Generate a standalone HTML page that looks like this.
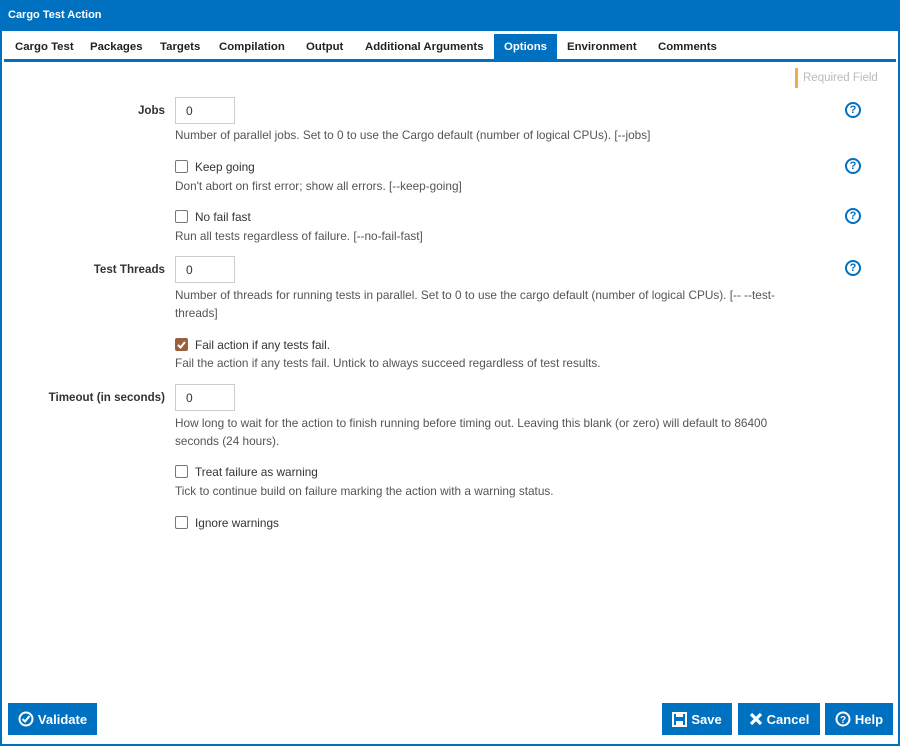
<!DOCTYPE html>
<html><head><style>
*{margin:0;padding:0;box-sizing:border-box}
body{width:900px;height:746px;background:#fff;font-family:"Liberation Sans",sans-serif;font-size:12px;color:#333;position:relative;overflow:hidden}
.frame{position:absolute;left:0;top:0;width:900px;height:746px;border:2px solid #0070c0;border-top:none}
.title{position:absolute;left:0;top:0;width:900px;height:31px;background:#0070c0;color:#fff;font-weight:bold;font-size:11px;padding:9px 8px}
.tab{position:absolute;top:34px;height:25px;font-weight:bold;font-size:11.4px;color:#222;padding-top:7px;white-space:nowrap}
.tab.on{background:#0070c0;color:#fff;text-align:center}
.line{position:absolute;left:4px;top:59px;width:892px;height:3px;background:#0070c0}
.req{position:absolute;left:795px;top:68px;height:20px;border-left:3px solid #f0ad4e;padding:4px 0 0 5px;color:#bbb;font-size:11.5px}
.lbl{position:absolute;right:735px;font-weight:bold;font-size:11.6px;color:#333}
.inp{position:absolute;left:175px;width:60px;height:27px;border:1px solid #ccc;padding:6px 10px;font-size:12px}
.help{position:absolute;left:175px;color:#555;font-size:11.8px;line-height:18px;width:620px}
.cb{position:absolute;left:175px;font-size:11.8px;color:#333}
.cb i{display:inline-block;width:13px;height:13px;border:1px solid #777;border-radius:2px;vertical-align:-2px;margin-right:7px;background:#fff}
.cb i.c{background:#9b5f3e;border-color:#9b5f3e;position:relative}
.q{position:absolute;left:845px;width:16px;height:16px;border:2px solid #0070c0;border-radius:50%;color:#0070c0;font-weight:bold;font-size:11px;text-align:center;line-height:12px}
.btn{position:absolute;top:703px;height:32px;background:#0070c0;color:#fff;font-weight:bold;font-size:13px;display:flex;align-items:center;justify-content:center;gap:4px}
.btn svg{display:block}
</style></head><body>
<div class="title">Cargo Test Action</div>
<div class="frame"></div>
<div class="tab" style="left:15px">Cargo Test</div>
<div class="tab" style="left:90px">Packages</div>
<div class="tab" style="left:160px">Targets</div>
<div class="tab" style="left:219px">Compilation</div>
<div class="tab" style="left:306px">Output</div>
<div class="tab" style="left:365px">Additional Arguments</div>
<div class="tab on" style="left:494px;width:63px">Options</div>
<div class="tab" style="left:567px">Environment</div>
<div class="tab" style="left:658px">Comments</div>
<div class="line"></div>
<div class="req">Required Field</div>

<div class="lbl" style="top:104px">Jobs</div>
<div class="inp" style="top:97px">0</div>
<div class="q" style="top:102px">?</div>
<div class="help" style="top:126px">Number of parallel jobs. Set to 0 to use the Cargo default (number of logical CPUs). [--jobs]</div>

<div class="cb" style="top:160px"><i></i>Keep going</div>
<div class="q" style="top:158px">?</div>
<div class="help" style="top:177px">Don't abort on first error; show all errors. [--keep-going]</div>

<div class="cb" style="top:210px"><i></i>No fail fast</div>
<div class="q" style="top:208px">?</div>
<div class="help" style="top:227px">Run all tests regardless of failure. [--no-fail-fast]</div>

<div class="lbl" style="top:263px">Test Threads</div>
<div class="inp" style="top:256px">0</div>
<div class="q" style="top:260px">?</div>
<div class="help" style="top:286px">Number of threads for running tests in parallel. Set to 0 to use the cargo default (number of logical CPUs). [-- --test-threads]</div>

<div class="cb" style="top:338px"><i class="c"><svg width="11" height="11" style="position:absolute;left:0;top:0"><path d="M2 6l2.5 2.5L9 3" stroke="#fff" stroke-width="2" fill="none"/></svg></i>Fail action if any tests fail.</div>
<div class="help" style="top:354px">Fail the action if any tests fail. Untick to always succeed regardless of test results.</div>

<div class="lbl" style="top:391px">Timeout (in seconds)</div>
<div class="inp" style="top:384px">0</div>
<div class="help" style="top:414px">How long to wait for the action to finish running before timing out. Leaving this blank (or zero) will default to 86400 seconds (24 hours).</div>

<div class="cb" style="top:465px"><i></i>Treat failure as warning</div>
<div class="help" style="top:482px">Tick to continue build on failure marking the action with a warning status.</div>

<div class="cb" style="top:516px"><i></i>Ignore warnings</div>

<div class="btn" style="left:8px;width:89px"><svg width="16" height="16" viewBox="0 0 16 16"><circle cx="8" cy="8" r="6.5" stroke="#fff" stroke-width="2" fill="none"/><path d="M4.5 8l2.5 2.5L11.5 5" stroke="#fff" stroke-width="2" fill="none"/></svg>Validate</div>
<div class="btn" style="left:662px;width:70px"><svg width="15" height="15" viewBox="0 0 15 15"><rect x="1" y="1" width="13" height="13" stroke="#fff" stroke-width="2" fill="none"/><rect x="4" y="1" width="7" height="4" fill="#fff"/><rect x="4" y="9" width="7" height="5" fill="#fff"/></svg>Save</div>
<div class="btn" style="left:738px;width:82px"><svg width="14" height="14" viewBox="0 0 14 14"><path d="M2 2l10 10M12 2L2 12" stroke="#fff" stroke-width="3.2"/></svg>Cancel</div>
<div class="btn" style="left:825px;width:68px"><svg width="16" height="16" viewBox="0 0 16 16"><circle cx="8" cy="8" r="6.5" stroke="#fff" stroke-width="2" fill="none"/><text x="8" y="12" font-size="10" font-weight="bold" fill="#fff" text-anchor="middle" font-family="Liberation Sans">?</text></svg>Help</div>
</body></html>
